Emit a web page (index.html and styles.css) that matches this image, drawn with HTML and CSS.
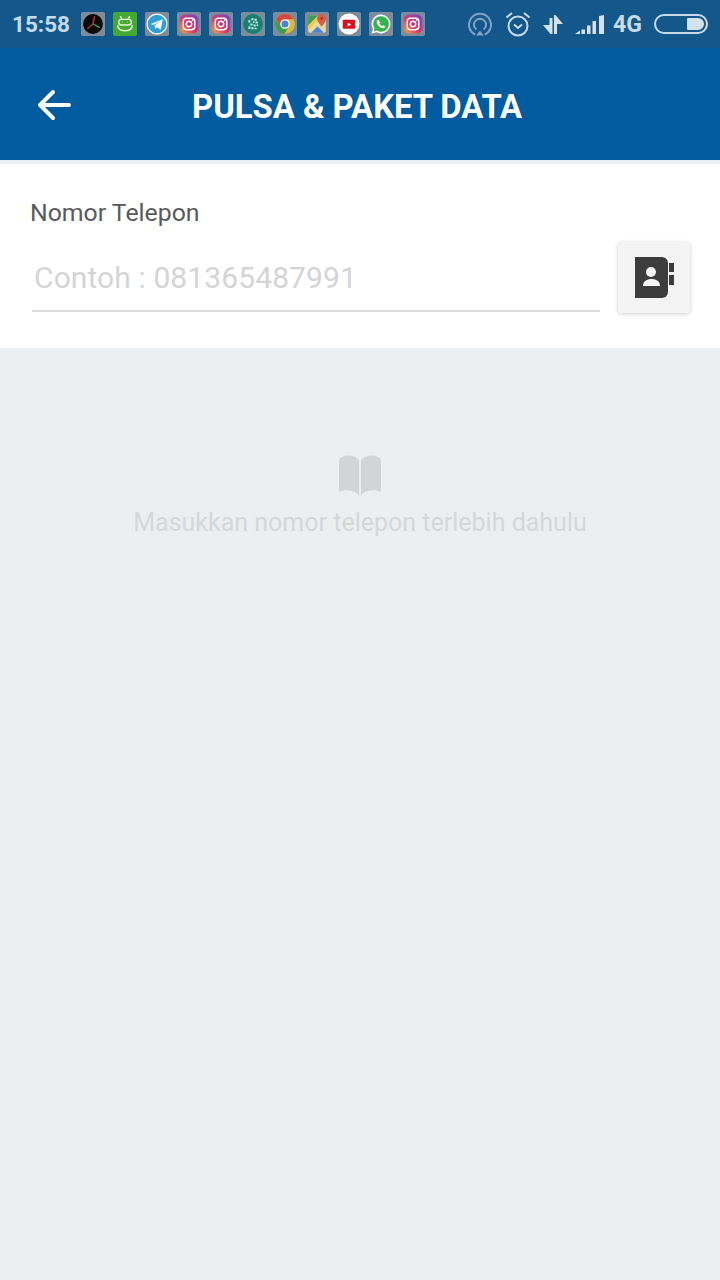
FILE: index.html
```html
<!DOCTYPE html>
<html lang="id">
<head>
<meta charset="utf-8">
<title>Pulsa &amp; Paket Data</title>
<link rel="stylesheet" href="styles.css">
</head>
<body>
<div class="status">
  <span class="time">15:58</span>
  <div class="notifs">
    <span class="tile"><svg viewBox="0 0 23 23"><circle cx="11.5" cy="11.5" r="9.5" fill="#0a0a0a"/><path d="M11.5 11.500L13 4" stroke="#c22" stroke-width="1.6"/><path d="M11.500 11.500L18 15" stroke="#3a7" stroke-width="1.200"/><path d="M11.500 11.500L6 16" stroke="#b33" stroke-width="1.400"/></svg></span>
    <span class="tile tile-green"><svg viewBox="0 0 23 23" fill="none" stroke="#e8f5e0" stroke-width="1.300"><path d="M7 4l1.500 3M16 4l-1.500 3"/><rect x="5.500" y="7" width="12" height="5.500" rx="2.700"/><path d="M4.500 12.500c0 3.500 2.500 5.500 7 5.500s7-2 7-5.500"/><path d="M9 9.500h.5M13.500 9.500h.5"/></svg></span>
    <span class="tile"><svg viewBox="0 0 23 23"><circle cx="11.500" cy="11.500" r="9.500" fill="#2f9fd8" stroke="#fff" stroke-width="1.200"/><path d="M5.500 11.500L17 7l-2 10-3.500-2.500-1.800 1.800-.4-3.300 5-4-6.300 3.500z" fill="#fff"/></svg></span>
    <span class="tile"><svg viewBox="0 0 23 23"><use href="#ig"/></svg></span>
    <span class="tile"><svg viewBox="0 0 23 23"><use href="#ig"/></svg></span>
    <span class="tile"><svg viewBox="0 0 23 23"><circle cx="11.500" cy="11.500" r="9.500" fill="#17806f"/><path d="M7 8h2v2H7zM10 6h2v2h-2zM13 6.500h2v2h-2zM14 9h2v2h-2zM9 11h2v2H9zM11.500 9h1.500v1.500h-1.500zM12 12h2v2h-2zM15 12h1.500v1.500H15zM7 14h2v2H7zM10 14.500h2v2h-2zM13 15h2v1.500h-2z" fill="#cfeee6"/></svg></span>
    <span class="tile"><svg viewBox="0 0 23 23"><circle cx="11.500" cy="11.500" r="9.500" fill="#e0b93a"/><path d="M11.500 2a9.500 9.500 0 0 0-8.200 4.700l4.100 7.100L11.500 7h8.200A9.500 9.500 0 0 0 11.500 2z" fill="#d9473b"/><path d="M3.300 6.700A9.500 9.500 0 0 0 11 21l4.100-7.100-7.700-.1z" fill="#3c9b54"/><circle cx="11.500" cy="11.500" r="4.600" fill="#fff"/><circle cx="11.500" cy="11.500" r="3.400" fill="#4a84d8"/></svg></span>
    <span class="tile"><svg viewBox="0 0 23 23"><rect x="3" y="3" width="17" height="17" rx="2" fill="#e8d8a0"/><path d="M3 3h10L3 13z" fill="#3c9b54"/><path d="M3 13L13 3h4L3 17z" fill="#f0c93c"/><path d="M6 20l6-6 6 6z" fill="#4a84d8"/><path d="M16 2c-2.600 0-4.400 2-4.400 4.300 0 3 4.400 7.700 4.400 7.700s4.400-4.700 4.400-7.700C20.400 4 18.600 2 16 2z" fill="#d75a4a"/><circle cx="16" cy="6.300" r="1.400" fill="#a83c30"/></svg></span>
    <span class="tile"><svg viewBox="0 0 23 23"><circle cx="11.500" cy="11.500" r="10" fill="#fff"/><rect x="5.500" y="7.500" width="12" height="8.500" rx="1" fill="#e0101e"/><path d="M10.300 10.200l3.400 1.800-3.400 1.800z" fill="#fff"/></svg></span>
    <span class="tile"><svg viewBox="0 0 23 23"><path d="M11.500 2.500a9 9 0 0 0-7.700 13.600L2.500 20.700l4.800-1.200a9 9 0 1 0 4.200-17z" fill="#fff"/><path d="M11.500 4a7.500 7.500 0 0 0-6.200 11.700l-.8 2.900 3-.8A7.500 7.500 0 1 0 11.500 4z" fill="#36b34a"/><path d="M8.800 7.500c-.5 0-1.300.8-1.300 2 0 2.800 3.300 6 6.200 6 1.200 0 2-.9 2-1.500l-2.200-1.200-.9.900c-1-.3-2.200-1.500-2.600-2.600l.8-.9z" fill="#fff"/></svg></span>
    <span class="tile"><svg viewBox="0 0 23 23"><use href="#ig"/></svg></span>
  </div>
  <div class="sys">
    <svg class="i-cast" viewBox="0 0 24 24" fill="none" stroke="#7fa3bf" stroke-width="2"><path d="M7 22.500a11 11 0 1 1 10 0"/><path d="M8.500 17.500a6 6 0 1 1 7 0"/><path d="M8 23.500h8l-4-5z" fill="#7fa3bf" stroke="none"/></svg>
    <svg class="i-alarm" viewBox="0 0 26 26" fill="none" stroke="#c8dbe8" stroke-width="2"><circle cx="13" cy="15" r="9.500"/><path d="M1.500 6.500l5.500-4.500M24.500 6.500l-5.500-4.500"/><path d="M9 13.500l4 3.500 4-3.500"/></svg>
    <svg class="i-data" viewBox="0 0 20 19" fill="#d5e2ec"><path d="M6.500 3h3v16h-2L0 10h6.500z"/><path d="M11 0h1.500L20 9h-6v10h-3z"/></svg>
    <svg class="i-signal" viewBox="0 0 30 19" fill="#d5e2ec"><path d="M0 19l5-3.500V19zM6.500 14.500h3.500V19H6.500zM12 10.500h3.500V19H12zM17.500 6h3.500v13h-3.500zM24 1l5-1v19h-5z"/></svg>
    <span class="net">4G</span>
    <span class="batt"><span class="batt-fill"></span></span>
  </div>
</div>
<svg class="defs" width="0" height="0"><defs><linearGradient id="igg" x1="0" y1="1" x2="1" y2="0"><stop offset="0" stop-color="#f5b13c"/><stop offset=".45" stop-color="#d9356f"/><stop offset="1" stop-color="#6a48c4"/></linearGradient><g id="ig"><rect x="2.500" y="2.500" width="18" height="18" rx="5" fill="url(#igg)"/><rect x="6" y="6" width="11" height="11" rx="3" fill="none" stroke="#fff" stroke-width="1.400"/><circle cx="11.500" cy="11.500" r="2.600" fill="none" stroke="#fff" stroke-width="1.400"/><circle cx="15" cy="8" r=".8" fill="#fff"/></g></defs></svg>

<header class="appbar">
  <svg class="back" viewBox="0 0 34 32" fill="none" stroke="#fff" stroke-width="4" stroke-linecap="round" stroke-linejoin="round"><path d="M16 3L3 16l13 13M4 16h28"/></svg>
  <h1 class="title">PULSA &amp; PAKET DATA</h1>
</header>

<section class="form">
  <label class="label">Nomor Telepon</label>
  <div class="row">
    <div class="input">Contoh : 081365487991</div>
    <button class="contact" type="button" aria-label="Kontak">
      <svg viewBox="0 0 40 41"><path d="M0 0h27a6 6 0 0 1 6 6v29a6 6 0 0 1-6 6H0z" fill="#3c3c3c"/><path d="M34 6h5v9h-5zM34 18h5v10h-5z" fill="#3c3c3c"/><circle cx="16" cy="15" r="5" fill="#f4f4f4"/><path d="M8 29c0-5 4-7 8.500-7s8.500 2 8.500 7z" fill="#f4f4f4"/></svg>
    </button>
  </div>
</section>

<main class="empty">
  <svg class="book" viewBox="0 0 44 42" fill="#d3d4d6"><path d="M21 5C19 2 15 0 10 0 5 0 1 2 0 5v33c5-2 9-2 13-1 4 1 7 3 8 5zM23 5c2-3 6-5 11-5s9 2 10 5v33c-5-2-9-2-13-1-4 1-7 3-8 5z"/></svg>
  <p class="hint">Masukkan nomor telepon terlebih dahulu</p>
</main>
</body>
</html>
```

FILE: styles.css
```css
* { box-sizing: border-box; }
html, body { margin: 0; height: 100%; }
body {
  width: 720px;
  height: 1280px;
  overflow: hidden;
  display: flex;
  flex-direction: column;
  background: #edeef0;
  font-family: Roboto, "Liberation Sans", sans-serif;
}
.defs { position: absolute; }

.status {
  height: 48px;
  flex: none;
  background: #14578b;
  display: flex;
  align-items: center;
  padding: 0 12px;
}
.time {
  width: 69px;
  font-size: 22.500px;
  font-weight: 700;
  color: #c4dbee;
}
.notifs { display: flex; gap: 8px; }
.tile {
  width: 24px;
  height: 24px;
  background: #7d8c9b;
  border-radius: 2px;
  display: block;
}
.tile svg { width: 24px; height: 24px; display: block; }
.tile-green { background: #45a92f; }
.sys { margin-left: auto; display: flex; align-items: center; }
.i-cast { width: 24px; height: 24px; margin-right: 13px; }
.i-alarm { width: 26px; height: 26px; margin-right: 12px; }
.i-data { width: 20px; height: 19px; margin-right: 12px; }
.i-signal { width: 30px; height: 19px; margin-right: 8px; }
.net { width: 28px; font-size: 23px; font-weight: 700; color: #c9dbe8; margin-right: 13px; }
.batt {
  width: 54px;
  height: 20px;
  border: 2.500px solid #c9dbe8;
  border-radius: 10px;
  display: flex;
  justify-content: flex-end;
  padding: 2px;
}
.batt-fill { width: 17px; background: #d5e2ec; border-radius: 1px 6px 6px 1px; }

.appbar {
  height: 112px;
  flex: none;
  background: #005b9f;
  display: flex;
  align-items: center;
  padding: 6px 0 0 37px;
}
.back { width: 34px; height: 32px; flex: none; margin-top: -4px; }
.title {
  margin: 0 0 0 121px;
  font-size: 32.800px;
  font-weight: 700;
  color: #fff;
}

.form {
  flex: none;
  height: 188px;
  border-top: 4px solid #eef0f2;
  background: #fff;
  padding: 33px 30px 0 30px;
}
.label {
  display: block;
  font-size: 24.800px;
  line-height: 32px;
  color: #5a5a5a;
}
.row { display: flex; margin-top: 29px; align-items: flex-start; justify-content: space-between; }
.input {
  width: 568px;
  height: 54px;
  margin: 0 0 0 2px;
  padding: 1px 0 0 2px;
  border-bottom: 2px solid #dcdcdc;
  font-size: 30px;
  line-height: 37px;
  letter-spacing: .1px;
  color: #d4d4d4;
}
.contact {
  width: 72px;
  height: 71px;
  margin-top: -16px;
  padding: 0 0 0 2px;
  border: 0;
  border-radius: 3px;
  background: #f4f4f4;
  box-shadow: 0 1px 4px rgba(0,0,0,.2);
  display: flex;
  align-items: center;
  justify-content: center;
}
.contact svg { width: 40px; height: 41px; display: block; }

.empty { display: flex; flex-direction: column; align-items: center; padding-top: 107px; }
.book { width: 42px; height: 41px; display: block; }
.hint {
  margin: 11px 0 0;
  font-size: 25px;
  line-height: 32px;
  color: #d6d7d9;
}
```
